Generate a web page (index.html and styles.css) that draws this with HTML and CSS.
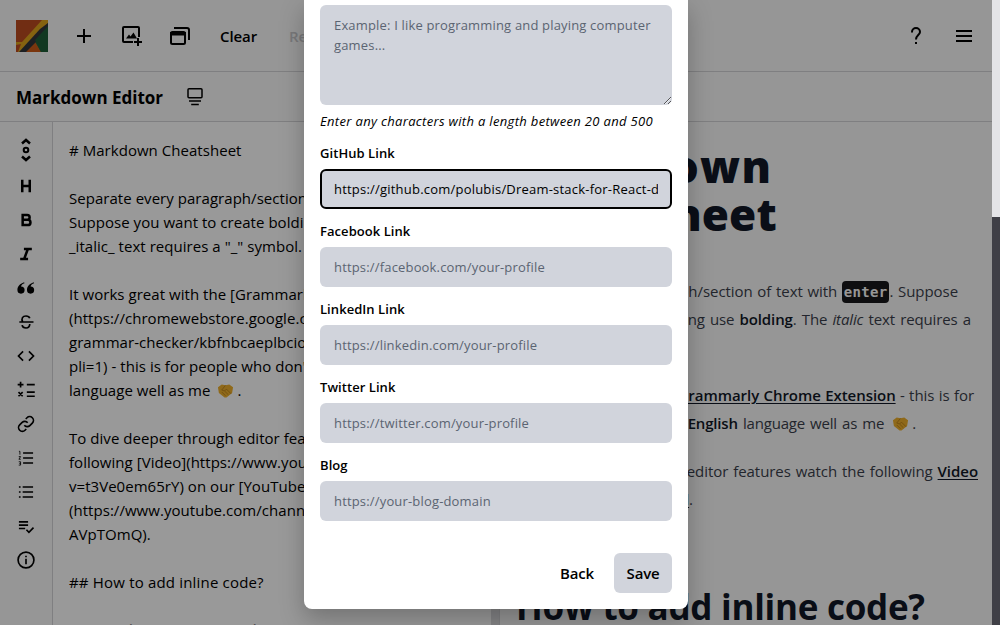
FILE: index.html
```html
<!DOCTYPE html>
<html lang="en">
<head>
<meta charset="utf-8">
<title>Markdown Editor</title>
<link rel="stylesheet" href="styles.css">
</head>
<body>
<div class="page">
<div class="app">
  <header class="topbar">
    <svg class="logo" viewBox="0 0 32 32"><rect width="32" height="32" fill="#bd4c20"/><path d="M30 2 11 24 21 32H32V0z" fill="#256c3c"/><path d="M18 20 10 32H25z" fill="#cc5b18"/><path d="M0 22 6 22 26 0H32V3L7 32H0z" fill="#dea31c"/><path d="M0 25 5 24 2 32H0z" fill="#bd4c20"/><path d="M32 3V10L10 32H3L24 9z" fill="#31343a"/><path d="M32 6 19 20 25 32H32z" fill="#1e5e38"/></svg>
    <button class="icon-btn"><svg viewBox="0 0 24 24"><path d="M12 5v14M5 12h14" class="s2"/></svg></button>
    <button class="icon-btn"><svg viewBox="0 0 24 24"><path d="M13 18H4a1 1 0 0 1-1-1V4a1 1 0 0 1 1-1h14a1 1 0 0 1 1 1v9" class="s2"/><path d="M6 14.500 9 10.500 10.500 12.500 13.500 8.500 17 14.500z"/><path d="M18 14v8M14 18h8" class="s2"/></svg></button>
    <button class="icon-btn"><svg viewBox="0 0 24 24"><path d="M6 4H19a2 2 0 0 1 2 2V16" class="s2"/><rect x="3" y="8" width="14" height="12" rx="1.500" class="s2"/><path d="M2 8h16v3.500H2z"/></svg></button>
    <button class="text-btn clear">Clear</button>
    <button class="text-btn disabled">Reset</button>
    <div class="spacer"></div>
    <button class="icon-btn help"><svg viewBox="0 0 24 24"><path d="M8 8.500V8a4 4 0 0 1 8 0c0 3-4 3.300-4 7.500M12 18v2" class="s2"/></svg></button>
    <button class="icon-btn"><svg viewBox="0 0 24 24"><path d="M4 7h16M4 12h16M4 17h16" class="s2"/></svg></button>
  </header>
  <div class="titlebar">
    <h2 class="title">Markdown Editor</h2>
    <svg class="view-icon" viewBox="0 0 20 20"><rect x="3" y="1.800" width="14" height="9" rx="1" class="s15"/><path d="M4 14.100h12M6.200 17.400h7.600" class="s15"/></svg>
  </div>
  <main class="workspace">
    <nav class="tools">
      <svg viewBox="0 0 24 24"><path d="M8 5.500 12 2l4 3.500M8 18.500 12 22l4-3.500" class="s25"/><circle cx="12" cy="12" r="2.300" class="s2"/></svg>
      <svg viewBox="0 0 24 24"><path d="M7.500 4.500v15M16.500 4.500v15M7.500 12h9" class="s3"/></svg>
      <svg viewBox="0 0 24 24"><path d="M8 6h5.500a2.800 2.800 0 0 1 0 5.700H8zM8 11.700h6.200a3.100 3.100 0 0 1 0 6.300H8z" class="s3"/></svg>
      <svg viewBox="0 0 24 24"><path d="M9.500 6H19M5 18h9.500M14.200 6 9.800 18" class="s3"/></svg>
      <svg viewBox="0 0 24 24"><path d="M10.500 5.200C5 7 2.500 10.500 2.500 14.500a4.300 4.300 0 1 0 4.300-4.300c.4-1.700 1.700-3 4.200-3.900zM22 5.200c-5.500 1.800-8 5.300-8 9.300a4.300 4.300 0 1 0 4.300-4.300c.4-1.700 1.700-3 4.200-3.900z" transform="translate(-.8 0)"/></svg>
      <svg viewBox="0 0 24 24"><path d="M4 12h17M8 12C6 7.500 8 4.800 12 4.800c2.500 0 4 1 4.500 2.700M16.500 14.500C16.500 17.800 15 19.200 12 19.200c-2.600 0-4.300-1.200-4.700-3.400" class="s2"/></svg>
      <svg viewBox="0 0 24 24"><path d="M8.500 6.500 3 12l5.500 5.500M15.500 6.500 21 12l-5.500 5.500" class="s2"/></svg>
      <svg viewBox="0 0 24 24"><path d="M5.500 2v7M2 5.500h7M13 5.500h9.500M3 14.500l5 5M8 14.500l-5 5M13 14.500h9.500M13 19.500h9.500" class="s2"/></svg>
      <svg viewBox="0 0 24 24"><path d="M10 13.500a4.500 4.500 0 0 0 6.600.4l3-3a4.500 4.500 0 0 0-6.400-6.400L11.700 6M14 10.500a4.500 4.500 0 0 0-6.600-.4l-3 3a4.500 4.500 0 0 0 6.400 6.400l1.500-1.500" class="s2"/></svg>
      <svg viewBox="0 0 24 24"><path d="M8.500 6h12M8.500 12h12M8.500 18h12" class="s2"/><path d="M3.500 4h1.200v4M3.300 10.300h2.200L3.500 13.500h2.200M3.300 16.500h2.200v4H3.300M4 18.500h1.500" class="s1"/></svg>
      <svg viewBox="0 0 24 24"><path d="M8 6h12.500M8 12h12.500M8 18h12.500M3.500 6h2M3.500 12h2M3.500 18h2" class="s2"/></svg>
      <svg viewBox="0 0 24 24"><path d="M3.500 7h11M3.500 11h11M3.500 15h7.500M12.500 16.500l3 3L21 14" class="s2"/></svg>
      <svg viewBox="0 0 24 24"><circle cx="12" cy="12" r="9.500" class="s2"/><path d="M12 10.500v6.500M12 6.800v2" class="s2"/></svg>
    </nav>
    <section class="editor">
      <div class="source">
        <p># Markdown Cheatsheet</p>
        <p class="blank"></p>
        <p>Separate every paragraph/section of text with</p>
        <p>Suppose you want to create bolding use **bolding**</p>
        <p>_italic_ text requires a "_" symbol.</p>
        <p class="blank"></p>
        <p>It works great with the [Grammarly Chrome</p>
        <p>(https://chromewebstore.google.com/detail/</p>
        <p>grammar-checker/kbfnbcaeplbcioakkpcpgfkobk</p>
        <p>pli=1) - this is for people who don't speak</p>
        <p>language well as me <svg class="shake" viewBox="0 0 18 18"><path d="M1 5 5 2l4 1 4-1 4 3-1 6-6 5H8l-6-5z" fill="#eeb02c"/><path d="M9 3 5 8l3 1 2-2 5 5M5 10l4 4M8 9l4 4" fill="none" stroke="#b47a18" stroke-width=".8"/></svg>.</p>
        <p class="blank"></p>
        <p>To dive deeper through editor features watch</p>
        <p>following [Video](https://www.youtube.com/watch?</p>
        <p>v=t3Ve0em65rY) on our [YouTube Channel]</p>
        <p>(https://www.youtube.com/channel/UCg3</p>
        <p>AVpTOmQ).</p>
        <p class="blank"></p>
        <p class="loose">## How to add inline code?</p>
        <p class="blank"></p>
        <p>Just add `backticks around` your words here</p>
      </div>
      <div class="pane-scroll"></div>
    </section>
    <article class="preview">
      <h1><span class="w-md">Markdown</span><span class="w-cs">Cheatsheet</span></h1>
      <p><span class="ln a">Separate every paragraph/section of text with <code>enter</code>. Suppose</span><span class="ln b">you want to create bolding use <b>bolding</b>. The <i>italic</i> text requires a</span><span class="ln g">"_" symbol.</span></p>
      <p><span class="ln c">It works great with the <a>Grammarly Chrome Extension</a> - this is for</span><span class="ln d">people who don't speak <b>English</b> language well as me <svg class="shake" viewBox="0 0 18 18"><path d="M1 5 5 2l4 1 4-1 4 3-1 6-6 5H8l-6-5z" fill="#eeb02c"/><path d="M9 3 5 8l3 1 2-2 5 5M5 10l4 4M8 9l4 4" fill="none" stroke="#b47a18" stroke-width=".8"/></svg>.</span></p>
      <p><span class="ln e">To dive deeper through editor features watch the following <a>Video</a></span><span class="ln f">our <a>YouTube Channel</a>.</span></p>
      <h2>How to add inline code?</h2>
    </article>
  </main>
  <div class="backdrop">
    <form class="modal">
      <div class="field">
        <textarea placeholder="Example: I like programming and playing computer games..."></textarea>
        <em class="hint">Enter any characters with a length between 20 and 500</em>
      </div>
      <div class="field"><label>GitHub Link</label><input class="active" value="https://github.com/polubis/Dream-stack-for-React-dev"></div>
      <div class="field"><label>Facebook Link</label><input placeholder="https://facebook.com/your-profile"></div>
      <div class="field"><label>LinkedIn Link</label><input placeholder="https://linkedin.com/your-profile"></div>
      <div class="field"><label>Twitter Link</label><input placeholder="https://twitter.com/your-profile"></div>
      <div class="field"><label>Blog</label><input placeholder="https://your-blog-domain"></div>
      <footer class="actions"><button type="button" class="btn">Back</button><button type="button" class="btn primary">Save</button></footer>
    </form>
  </div>
</div>
<div class="page-scroll"></div>
</div>
</body>
</html>
```
FILE: styles.css
```css
* { box-sizing: border-box; margin: 0; padding: 0; }
body { font-family: "Open Sans", "Noto Sans", sans-serif; font-size: 15px; color: #000; overflow: hidden; }
button, input, textarea { font: inherit; border: 0; background: none; color: inherit; }
svg { fill: #000; display: block; flex: none; }
.s1, .s15, .s2, .s25, .s3 { fill: none; stroke: #000; }
.s1 { stroke-width: 1; }
.s15 { stroke-width: 1.5; }
.s2 { stroke-width: 2; }
.s25 { stroke-width: 2.5; }
.s3 { stroke-width: 3; }

.page { display: flex; height: 625px; overflow: hidden; }
.app { position: relative; width: 992px; height: 625px; overflow: hidden; display: flex; flex-direction: column; background: #fafafa; }
.page-scroll { width: 8px; background: #3f3f46 linear-gradient(#e4e4e7, #e4e4e7) 0 0 / 8px 217px no-repeat; }

.topbar { height: 72px; flex: none; display: flex; align-items: center; padding: 0 16px; border-bottom: 1px solid #d4d4d8; }
.logo { width: 32px; height: 32px; margin-right: 24px; }
.icon-btn { width: 24px; height: 24px; margin-right: 24px; }
.icon-btn:last-child { margin-right: 0; }
.icon-btn svg { width: 24px; height: 24px; }
.text-btn { font-weight: 600; height: 40px; letter-spacing: -.1px; }
.clear { margin-left: 4px; }
.disabled { margin-left: 32px; color: #c8c8cb; }
.spacer { flex: 1; }
.titlebar { height: 50px; flex: none; display: flex; align-items: center; gap: 22px; padding: 0 16px; border-bottom: 1px solid #d4d4d8; }
.title { font-size: 17px; font-weight: 700; width: 147px; white-space: nowrap; padding-top: 2px; }
.view-icon { width: 20px; height: 20px; }

.workspace { flex: 1; min-height: 0; display: flex; }
.tools { width: 53px; flex: none; border-right: 1px solid #d4d4d8; display: flex; flex-direction: column; align-items: center; gap: 14px; padding-top: 18px; }
.tools svg { width: 20px; height: 20px; }
.tools svg:first-child { width: 24px; height: 24px; margin: -2px 0; margin-bottom: 0; }
.editor { width: 447px; flex: none; display: flex; overflow: hidden; background: #fff; border-right: 1px solid #d4d4d8; }
.source { flex: 1; padding: 16px; overflow: hidden; white-space: nowrap; letter-spacing: .04px; }
.source p { height: 24px; line-height: 24px; }
.source .loose { letter-spacing: .18px; }
.pane-scroll { width: 8px; background: #dddde0; }
.shake { display: inline-block; width: 17px; height: 18px; vertical-align: -4px; margin: 0 3px 0 3px; }

.preview { flex: 1; padding: 20px 16px; overflow: hidden; color: #3a3f4b; white-space: nowrap; letter-spacing: -.05px; }
.preview h1 { font-size: 44px; line-height: 48px; font-weight: 800; color: #111827; margin-bottom: 39px; letter-spacing: .1px; }
.preview h1 span { display: block; }
.preview .w-md { letter-spacing: 1.35px; }
.preview p { line-height: 28px; margin-bottom: 20px; }
.preview b, .preview a { color: #111827; font-weight: 600; }
.preview a { text-decoration: underline; text-underline-offset: 2px; }
.preview code { font: 700 14px/20px "DejaVu Sans Mono", monospace; display: inline-block; padding: 1px 2px; border-radius: 4px; background: #18181b; color: #fafafa; letter-spacing: .3px; }
.ln { display: block; height: 28px; text-align-last: justify; white-space: normal; }
.a { width: 442px; }
.b { width: 455px; letter-spacing: -.12px; }
.c { width: 458px; }
.d { width: 400px; letter-spacing: -.18px; }
.e { width: 462px; }
.f { width: 177px; }
.g { text-align-last: left; }
.preview h2 { font-size: 35px; line-height: 44px; font-weight: 700; color: #111827; margin-top: 72px; letter-spacing: -.27px; }

.backdrop { position: absolute; inset: 0; background: rgba(0, 0, 0, .4); display: flex; align-items: flex-start; justify-content: center; }
.modal { width: 384px; height: 609px; padding: 5px 16px 16px; background: #fff; border-radius: 0 0 8px 8px; box-shadow: 0 10px 24px rgba(0, 0, 0, .25); display: flex; flex-direction: column; gap: 12px; font-size: 13px; }
.field { display: flex; flex-direction: column; gap: 6px; line-height: 20px; }
.field label { font-weight: 600; letter-spacing: .06px; }
.field input, .field textarea { background: #d1d4dc; border-radius: 6px; padding: 0 14px; width: 352px; height: 40px; letter-spacing: .17px; }
.field textarea { height: 100px; padding: 10px 14px; line-height: 20px; display: block; }
.field ::placeholder { color: #5b6472; opacity: 1; }
.field .active { border: 2px solid #000; padding: 0 12px; letter-spacing: .21px; }
.hint { white-space: nowrap; letter-spacing: .33px; }
.actions { margin-top: 20px; display: flex; justify-content: flex-end; gap: 8px; }
.btn { width: 58px; height: 40px; border-radius: 6px; font-size: 15px; font-weight: 600; letter-spacing: -.2px; }
.primary { background: #d1d4dc; }
```
